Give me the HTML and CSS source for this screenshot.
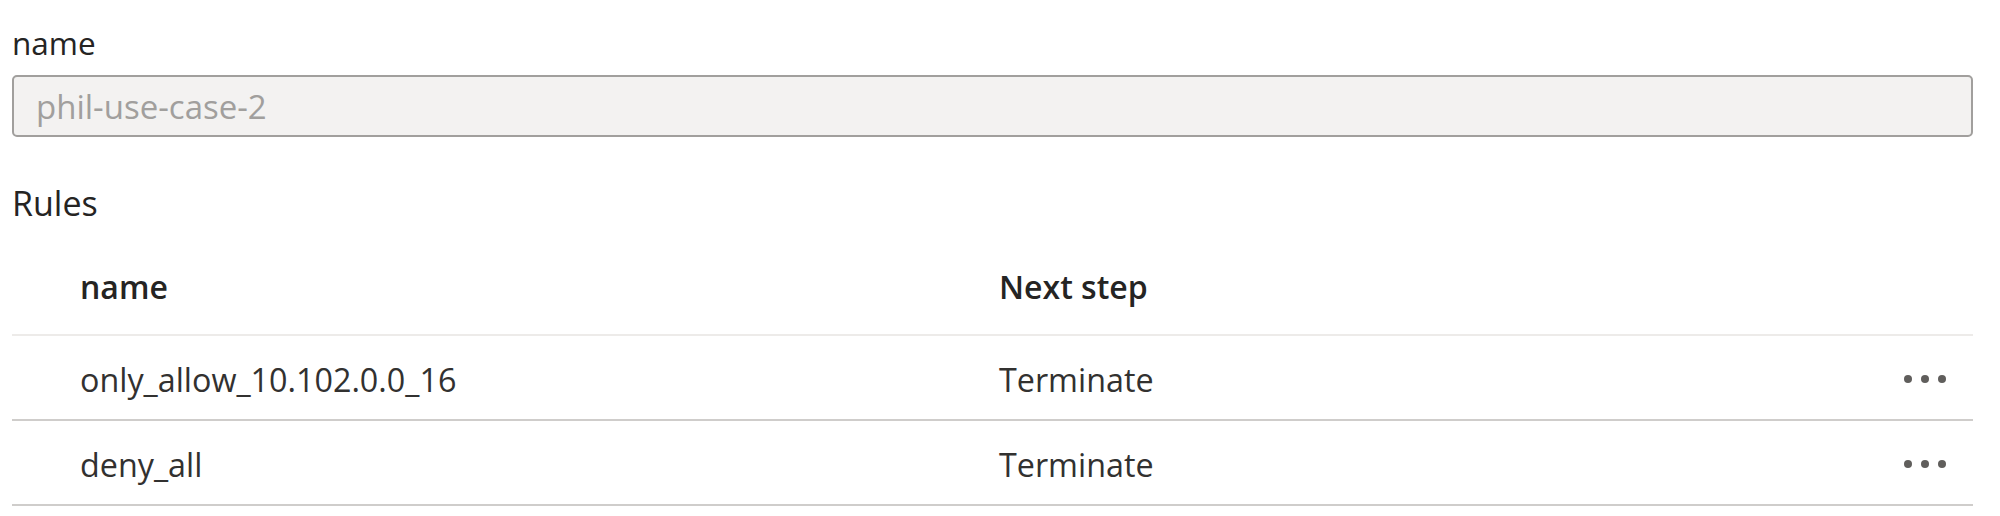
FILE: index.html
```html
<!DOCTYPE html>
<html lang="en">
<head>
<meta charset="utf-8">
<title>Rule set</title>
<link rel="stylesheet" href="styles.css">
</head>
<body>
<div class="page">
  <label class="field-label" for="name">name</label>
  <div class="input" id="name"><span class="placeholder">phil-use-case-2</span></div>
  <h2 class="section-title">Rules</h2>
  <div class="table">
    <div class="row header">
      <div class="cell first">name</div>
      <div class="cell">Next step</div>
      <div class="cell actions"></div>
    </div>
    <div class="row">
      <div class="cell first">only_allow_10.102.0.0_16</div>
      <div class="cell">Terminate</div>
      <div class="cell actions"><span class="more"><i></i><i></i><i></i></span></div>
    </div>
    <div class="row">
      <div class="cell first">deny_all</div>
      <div class="cell">Terminate</div>
      <div class="cell actions"><span class="more"><i></i><i></i><i></i></span></div>
    </div>
  </div>
</div>
</body>
</html>
```
FILE: styles.css
```css
html, body {
  margin: 0;
  padding: 0;
  background: #ffffff;
}
body {
  font-family: "Open Sans", "Noto Sans", sans-serif;
  color: #323130;
}
.page {
  padding: 22px 27px 0 12px;
}
.field-label {
  display: block;
  font-size: 31.5px;
  line-height: 42px;
  margin-bottom: 11px;
  color: #252423;
}
.input {
  box-sizing: border-box;
  height: 62px;
  border: 2px solid #a19f9d;
  border-radius: 5px;
  background: #f3f2f1;
  display: flex;
  align-items: center;
  padding-left: 22px;
}
.placeholder {
  font-size: 33px;
  line-height: 42px;
  color: #a19f9d;
  padding-top: 2px;
}
.section-title {
  margin: 44px 0 0 0;
  font-size: 34px;
  font-weight: 400;
  line-height: 44px;
  color: #252423;
}
.table {
  display: flex;
  flex-direction: column;
}
.row {
  display: grid;
  grid-template-columns: 987px 1fr auto;
  align-items: center;
  height: 85px;
  box-sizing: border-box;
  border-bottom: 2px solid #cfcdcb;
  font-size: 32.3px;
  line-height: 42px;
}
.row.header {
  height: auto;
  align-items: start;
  padding: 41px 0 26px 0;
  border-bottom-color: #edebe9;
  font-weight: 600;
  font-size: 32px;
  color: #252423;
}
.cell.first {
  padding-left: 68px;
}
.row:not(.header) .cell {
  padding-top: 2px;
}
.actions {
  padding-right: 27px;
  display: flex;
  justify-content: flex-end;
}
.more {
  display: flex;
  gap: 9px;
  align-items: center;
}
.more i {
  display: block;
  width: 8px;
  height: 8px;
  border-radius: 50%;
  background: #605e5c;
}
```
